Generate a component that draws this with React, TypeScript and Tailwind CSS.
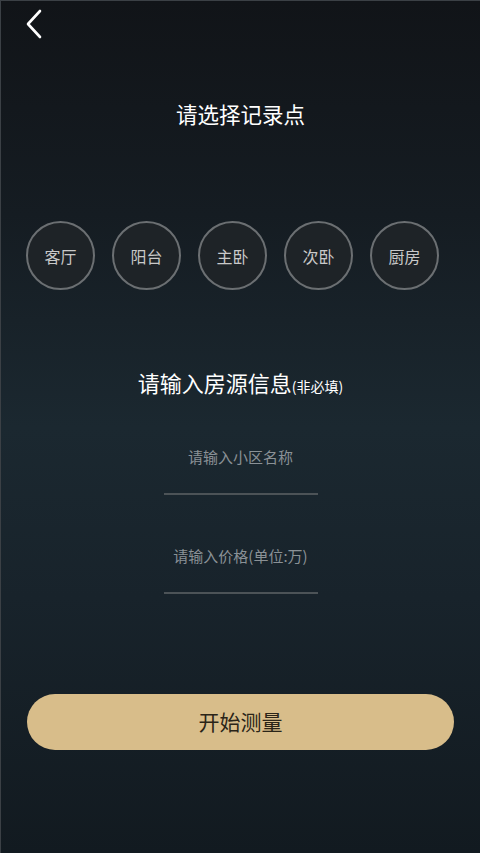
const rooms = ['客厅', '阳台', '主卧', '次卧', '厨房'];

function BackIcon() {
  return (
    <svg width="20" height="30" viewBox="0 0 20 30" fill="none">
      <path d="M16 2 L4 15 L16 28" stroke="#ffffff" strokeWidth="2.6" strokeLinecap="round" strokeLinejoin="round" />
    </svg>
  );
}

function Field({ placeholder }: { placeholder: string }) {
  return (
    <div className="w-[154px] flex flex-col items-center">
      <input
        placeholder={placeholder}
        className="w-[200px] h-[36px] bg-transparent text-center text-[15px] text-[#c8ccd0] placeholder:text-[#8a9196] outline-none"
      />
      <div className="mt-[19px] w-full h-[2px] bg-[#4c5357]" />
    </div>
  );
}

export default function App() {
  return (
    <div
      className="w-[480px] h-[853px] overflow-hidden flex flex-col border-t border-l border-[#3b4045] bg-[linear-gradient(180deg,#111418_0%,#151c22_25%,#1b2830_50%,#18232b_70%,#121a20_100%)]"
      style={{ fontFamily: '"Noto Sans CJK SC", "Noto Sans", sans-serif' }}
    >
      <button type="button" className="ml-[23px] mt-[8px] w-[24px] h-[30px] flex items-center" aria-label="返回">
        <BackIcon />
      </button>

      <h1 className="mt-[61px] text-center text-[21.5px] leading-[28px] text-white">请选择记录点</h1>

      <div className="mt-[93px] pl-[25px] flex gap-[17px]">
        {rooms.map((r) => (
          <button
            key={r}
            type="button"
            className="w-[69px] h-[69px] rounded-full border-2 border-[#6b6f72] bg-[#1e2327] text-[16px] text-[#c9c9c9] flex items-center justify-center"
          >
            {r}
          </button>
        ))}
      </div>

      <h2 className="mt-[78px] text-center text-[22px] leading-[28px] text-white">
        请输入房源信息<span className="text-[14px]">(非必填)</span>
      </h2>

      <div className="mt-[38px] flex flex-col items-center gap-[42px]">
        <Field placeholder="请输入小区名称" />
        <Field placeholder="请输入价格(单位:万)" />
      </div>

      <button
        type="button"
        className="mt-[100px] mx-[26px] h-[56px] rounded-full bg-[#d8bd8a] text-[21px] text-[#2a2418] flex items-center justify-center"
      >
        开始测量
      </button>
    </div>
  );
}
